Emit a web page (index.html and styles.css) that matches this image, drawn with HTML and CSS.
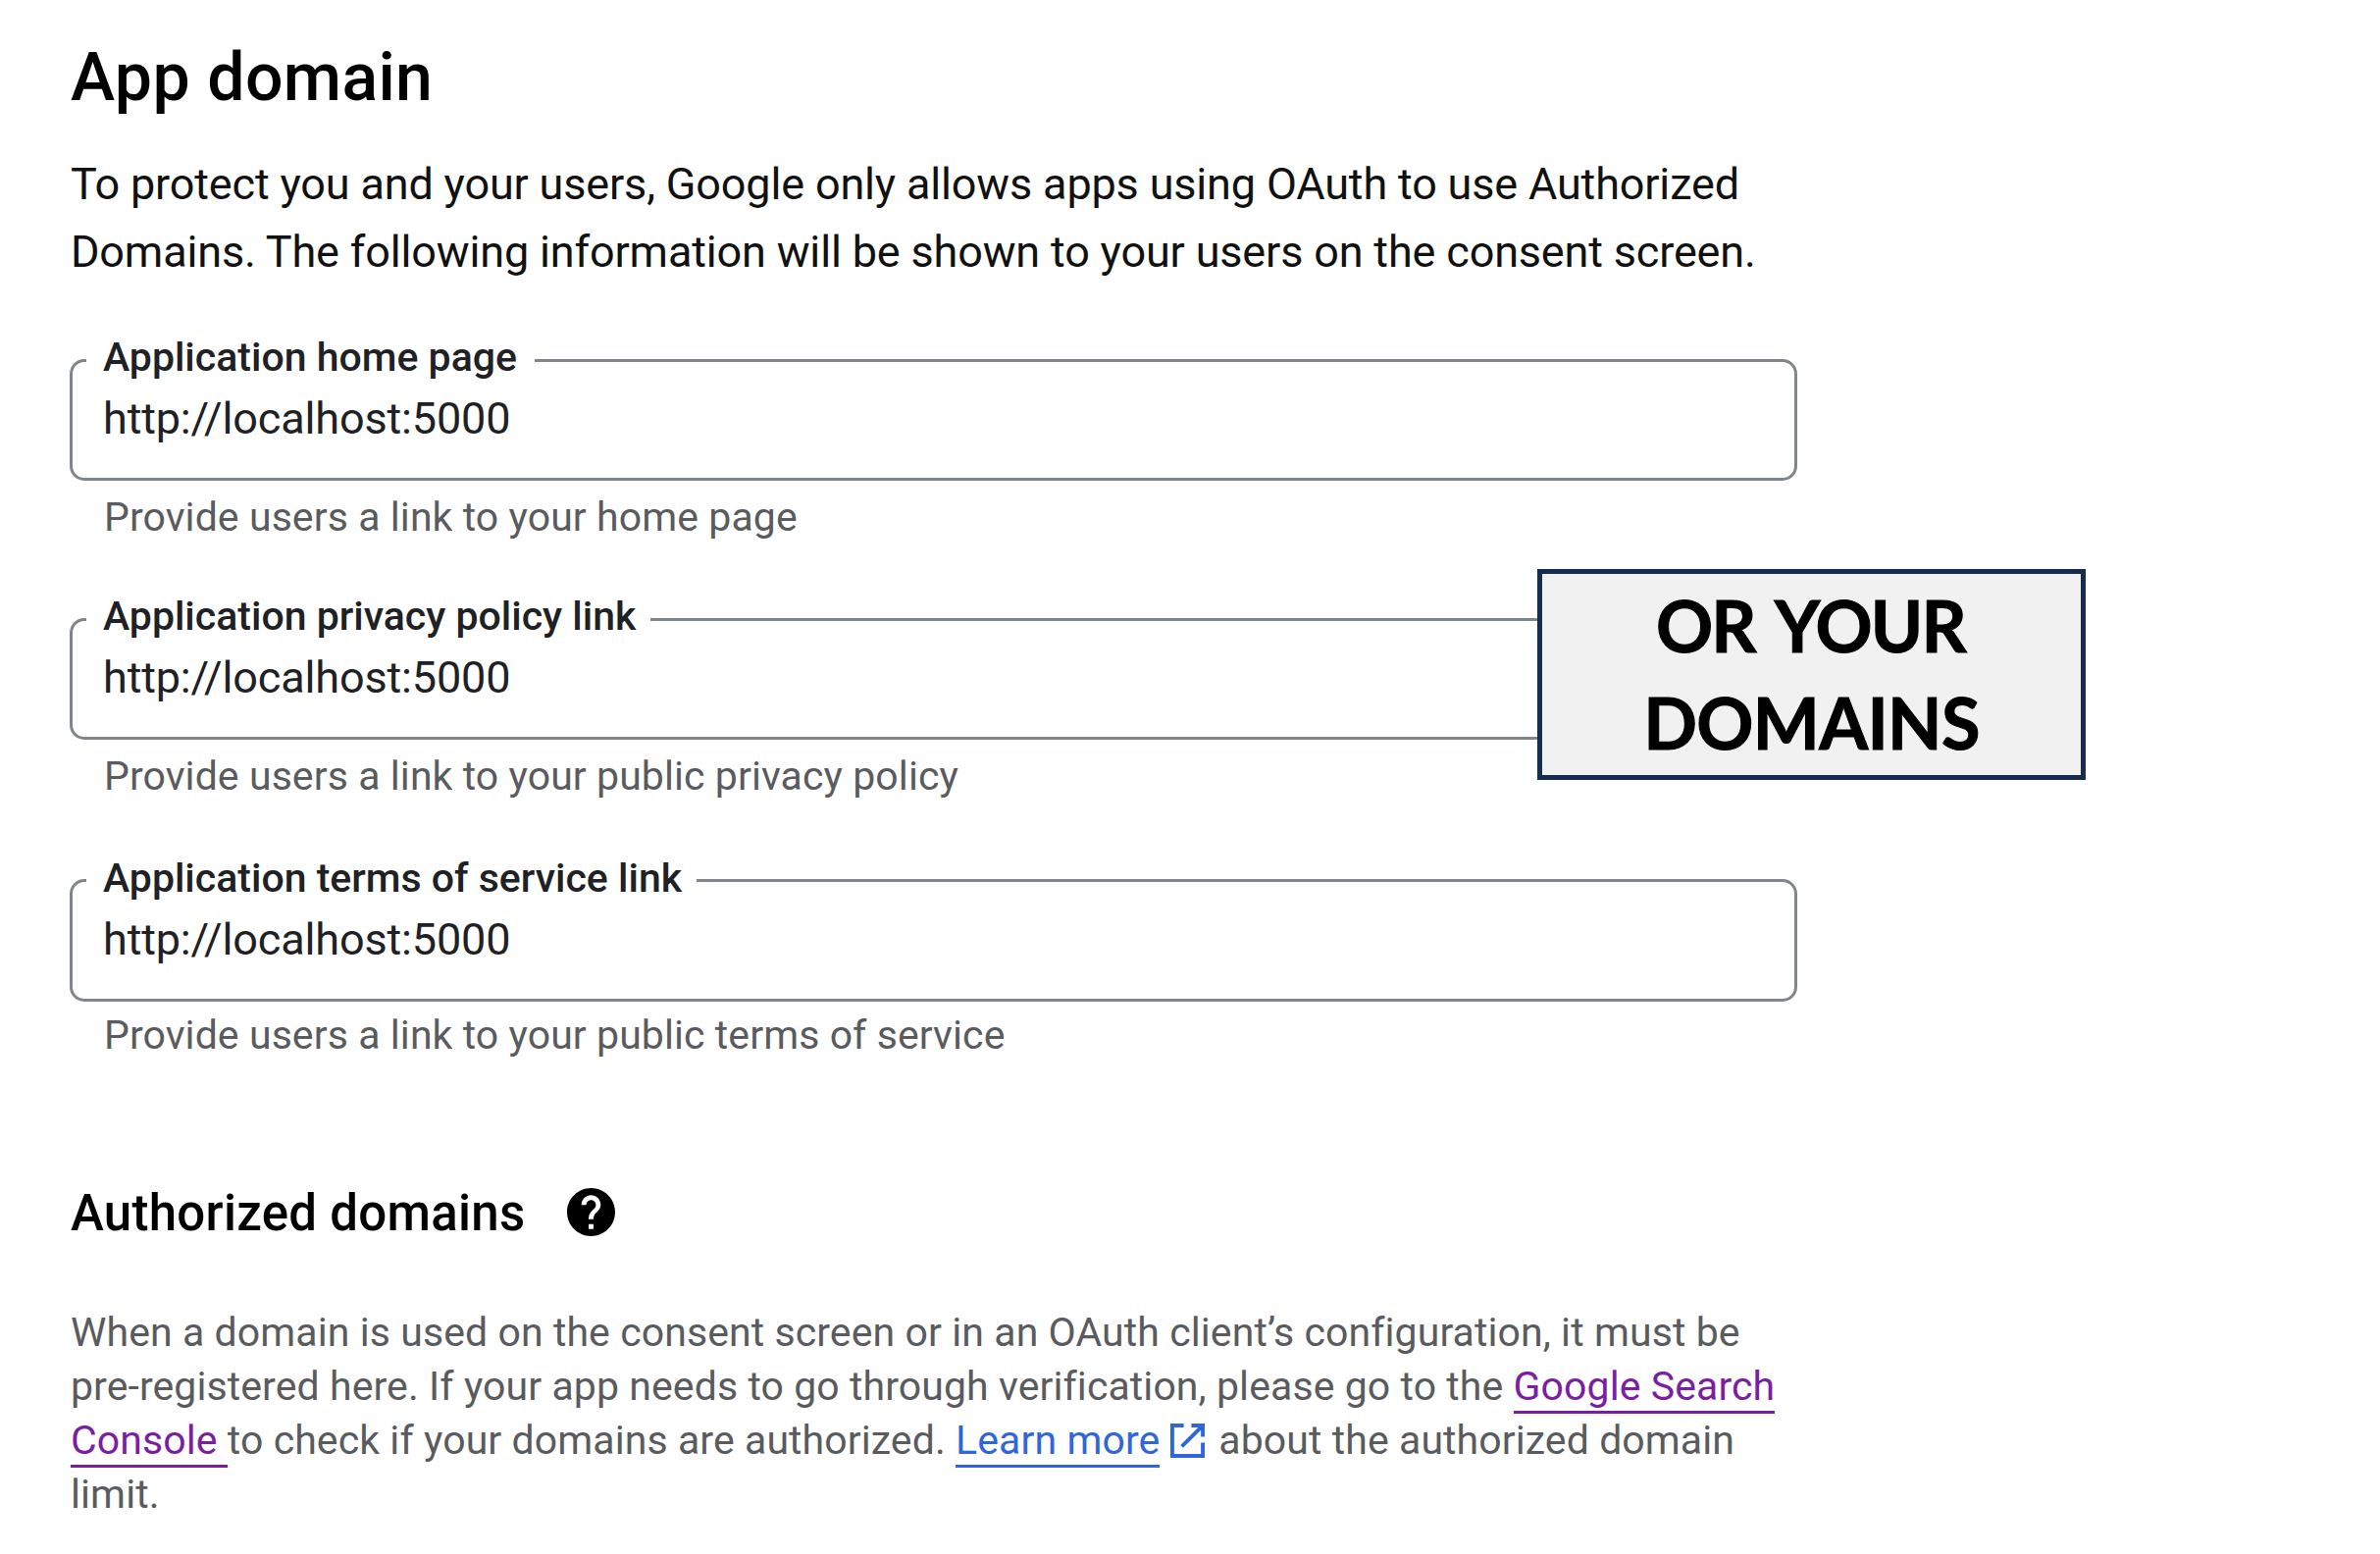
FILE: index.html
```html
<!DOCTYPE html>
<html lang="en">
<head>
<meta charset="utf-8">
<title>App domain</title>
<link rel="stylesheet" href="styles.css">
</head>
<body>
<main class="page">
  <h1 class="title">App domain</h1>
  <p class="intro">To protect you and your users, Google only allows apps using OAuth to use Authorized<br>Domains. The following information will be shown to your users on the consent screen.</p>

  <div class="field">
    <fieldset class="box"><legend class="label">Application home page</legend><div class="value">http://localhost:5000</div></fieldset>
    <p class="hint">Provide users a link to your home page</p>
  </div>
  <div class="field">
    <fieldset class="box"><legend class="label label-long">Application privacy policy link</legend><div class="value">http://localhost:5000</div></fieldset>
    <p class="hint">Provide users a link to your public privacy policy</p>
    <aside class="callout"><span class="spaced">OR YOUR</span><br>DOMAINS</aside>
  </div>
  <div class="field">
    <fieldset class="box"><legend class="label label-long">Application terms of service link</legend><div class="value">http://localhost:5000</div></fieldset>
    <p class="hint hint-last">Provide users a link to your public terms of service</p>
  </div>

  <div class="subhead">
    <h2 class="subtitle">Authorized domains</h2>
    <svg class="help" viewBox="2 2 20 20" aria-hidden="true"><path d="M12 2C6.480 2 2 6.480 2 12s4.480 10 10 10 10-4.480 10-10S17.520 2 12 2zm1 17h-2v-2h2v2zm2.070-7.750l-.9.920C13.450 12.900 13 13.500 13 15h-2v-.5c0-1.100.45-2.100 1.170-2.830l1.240-1.260c.37-.36.590-.86.590-1.410 0-1.100-.9-2-2-2s-2 .9-2 2H8c0-2.210 1.790-4 4-4s4 1.790 4 4c0 .88-.36 1.680-.930 2.250z"/></svg>
  </div>
  <p class="body">When a domain is used on the consent screen or in an OAuth client’s configuration, it must be<br>pre-registered here. If your app needs to go through verification, please go to the <a class="link visited">Google Search</a><br><a class="link visited">Console&nbsp;</a>to check if your domains are authorized. <a class="link">Learn more</a><svg class="external" viewBox="3 3 18 18" aria-hidden="true"><path d="M19 19H5V5h5V3H3v18h18v-8h-2v6zM14 3v2h3.590l-9.330 9.330 1.410 1.410L19 6.410V10h2V3h-7z"/></svg>about the authorized domain<br>limit.</p>
</main>
</body>
</html>
```
FILE: styles.css
```css
* { box-sizing: border-box; }
body { margin: 0; background: #fff; color: #000; font-family: Roboto, sans-serif; }
h1, h2, p, fieldset, legend { margin: 0; padding: 0; font-weight: 400; }
.page { width: 1832px; padding: 39px 0 0 72px; white-space: nowrap; }
.title { font-size: 68px; line-height: 80px; font-weight: 500; letter-spacing: 0.35px; }
.intro { margin: 34px 0 49px; font-size: 45px; line-height: 69px; letter-spacing: -0.165px; color: #111; }
.field { position: relative; height: 264px; }
.field + .field + .field { margin-top: 2.5px; }
.box { height: 150px; margin-left: -1px; padding: 0 0 0 14px; border: 3px solid #80868b; border-radius: 15px; }
.label { height: 54px; padding: 0 18px 5px 17px; font-size: 41px; line-height: 49px; font-weight: 500; color: #202124; }
.label-long { padding-right: 15px; letter-spacing: 0; }
.value { padding: 3px 0 0 17px; font-size: 45px; line-height: 60px; letter-spacing: -0.16px; color: #202124; }
.hint { margin-top: 12px; padding-left: 34px; font-size: 41px; line-height: 50px; letter-spacing: 0.08px; color: #5a5b5e; }
.hint-last { margin-top: 9px; }
.callout { position: absolute; left: 1495px; top: -24px; width: 559px; height: 215px; padding-top: 3px; border: 5px solid #172c51; background: #f1f1f1; font: 700 72px/99px Lato, sans-serif; letter-spacing: -0.7px; text-align: center; -webkit-text-stroke: 1px #000; }
.spaced { margin-right: 2px; letter-spacing: -1.800px; word-spacing: 7px; }
.subhead { display: flex; align-items: center; gap: 43px; height: 64px; margin-top: 69px; }
.subtitle { padding-top: 1px; font-size: 51px; line-height: 63px; font-weight: 500; letter-spacing: 0.28px; }
.help { width: 49px; height: 49px; }
.body { margin-top: 63px; font-size: 41px; line-height: 55px; letter-spacing: 0.085px; color: #5a5b5e; }
.link { padding-bottom: 1px; color: #2f66dc; border-bottom: 3px solid; }
.visited { color: #7b1fa2; }
.external { width: 35px; height: 35px; margin: 0 14px 0 11px; fill: #2f66dc; vertical-align: -4px; }
```
